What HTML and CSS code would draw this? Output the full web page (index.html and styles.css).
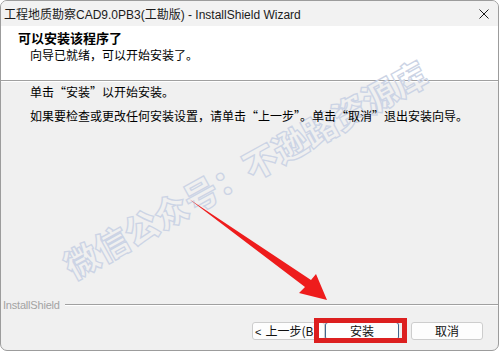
FILE: index.html
```html
<!DOCTYPE html>
<html lang="zh-CN">
<head>
<meta charset="utf-8">
<title>InstallShield Wizard</title>
<link rel="stylesheet" href="styles.css">
</head>
<body>
<div class="window">
  <div class="titlebar">
    <span class="title">工程地质勘察CAD9.0PB3(工勘版) - InstallShield Wizard</span>
    <svg class="close" width="10" height="10" viewBox="0 0 10 10"><path d="M0.5 0.5 L9.5 9.5 M9.5 0.5 L0.5 9.5" stroke="#1a1a1a" stroke-width="1" fill="none"/></svg>
  </div>
  <div class="header">
    <div class="h-title">可以安装该程序了</div>
    <div class="h-sub">向导已就绪，可以开始安装了。</div>
  </div>
  <div class="sep"></div>
  <div class="content">
    <p class="msg">单击“安装”以开始安装。</p>
    <p class="msg">如果要检查或更改任何安装设置，请单击“上一步”。单击“取消”退出安装向导。</p>
  </div>
  <div class="brand">
    <span class="brand-name">InstallShield</span>
    <span class="brand-line"></span>
  </div>
  <div class="buttons">
    <button class="btn btn-back"><span class="chev">&lt;</span>上一步(B)</button>
    <button class="btn btn-default">安装</button>
    <button class="btn btn-cancel">取消</button>
  </div>
</div>

<div class="watermark">微信公众号：不逊路资源库</div>

<svg class="arrow" width="500" height="354" viewBox="0 0 500 354">
  <polygon points="189,199 311,280 316,274 327,300 299,293 305,287" fill="#ee1c1c"/>
</svg>
<div class="redbox"></div>
</body>
</html>
```

FILE: styles.css
```css
* { box-sizing: border-box; }

html, body {
  margin: 0;
  padding: 0;
}

body {
  width: 500px;
  height: 354px;
  background: #ffffff;
  position: relative;
  overflow: hidden;
  font-family: "Liberation Sans", "Noto Sans CJK SC", sans-serif;
  font-size: 12px;
  color: #000;
}

.window {
  width: 499px;
  height: 351px;
  border: 1px solid #9c9c9c;
  border-radius: 7px;
  overflow: hidden;
  background: #f0f0f0;
  display: flex;
  flex-direction: column;
}

.titlebar {
  height: 25px;
  flex: none;
  background: #f2f2f2;
  display: flex;
  align-items: center;
  padding-left: 3px;
  padding-right: 9px;
}

.title {
  flex: 1;
  font-size: 12px;
  color: #1b1b1b;
  white-space: nowrap;
}

.close {
  display: block;
  margin-top: 1px;
}

.header {
  height: 54px;
  flex: none;
  background: #ffffff;
  padding: 4px 0 0 17px;
}

.h-title {
  font-family: "Noto Sans CJK SC", sans-serif;
  font-weight: bold;
  font-size: 13px;
  line-height: 16px;
}

.h-sub {
  font-family: "Noto Sans CJK SC", sans-serif;
  font-size: 12px;
  line-height: 16px;
  margin-top: 1px;
  padding-left: 12px;
  font-feature-settings: "fwid";
}

.sep {
  flex: none;
  height: 2px;
  border-top: 1px solid #a0a0a0;
  border-bottom: 1px solid #ffffff;
}

.content {
  flex: 1;
  padding: 2px 0 0 29px;
}

.msg {
  position: relative;
  z-index: 2;
  margin: 0 0 8px 0;
  font-family: "Noto Sans CJK SC", sans-serif;
  font-size: 12px;
  line-height: 16px;
  font-feature-settings: "fwid";
  white-space: nowrap;
}

.brand {
  flex: none;
  height: 14px;
  display: flex;
  align-items: center;
  padding-left: 2px;
}

.brand-name {
  font-size: 11px;
  letter-spacing: -0.2px;
  color: #a3a3a3;
}

.brand-line {
  flex: 1;
  height: 2px;
  margin-left: 5px;
  border-top: 1px solid #a0a0a0;
  border-bottom: 1px solid #ffffff;
}

.buttons {
  flex: none;
  display: flex;
  justify-content: flex-end;
  padding: 10px 15px 10px 0;
}

.btn {
  height: 18px;
  margin: 0;
  padding: 0;
  border: 1px solid #cdcdcd;
  border-radius: 3px;
  background: #fdfdfd;
  font-family: "Noto Sans CJK SC", sans-serif;
  font-size: 12px;
  line-height: 16px;
  color: #111;
}

.btn-back {
  width: 73px;
  text-align: left;
  padding-left: 2px;
  white-space: nowrap;
}

.chev {
  display: inline-block;
  font-family: "Liberation Sans", sans-serif;
  font-size: 11px;
  margin-right: 4px;
}

.btn-default {
  width: 74px;
  border-color: #42668c;
}

.btn-cancel {
  width: 72px;
  margin-left: 12px;
}

.watermark {
  position: absolute;
  z-index: 1;
  left: 41px;
  top: 148px;
  width: 408px;
  text-align: center;
  font-family: "Noto Sans CJK SC", sans-serif;
  font-weight: 900;
  font-size: 34px;
  line-height: 42px;
  white-space: nowrap;
  color: transparent;
  -webkit-text-stroke: 1.3px #ccd4e5;
  transform: rotate(-29deg);
  transform-origin: 50% 50%;
  pointer-events: none;
}

.arrow {
  position: absolute;
  z-index: 3;
  left: 0;
  top: 0;
  pointer-events: none;
}

.redbox {
  position: absolute;
  z-index: 3;
  left: 314px;
  top: 318px;
  width: 93px;
  height: 25px;
  border: 5px solid #dc1f1f;
}
```
